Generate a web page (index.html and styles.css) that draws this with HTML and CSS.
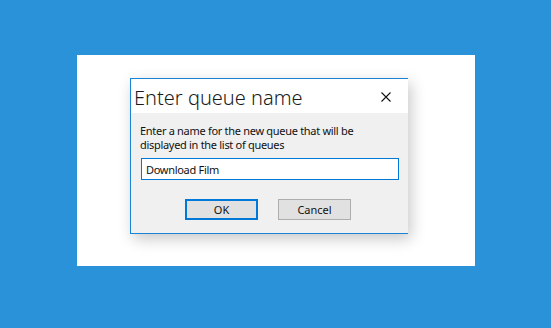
FILE: index.html
```html
<!DOCTYPE html>
<html lang="en">
<head>
    <meta charset="UTF-8">
    <meta name="viewport" content="width=device-width, initial-scale=1.0">
    <title>Enter queue name</title>
    <link rel="stylesheet" href="styles.css">
</head>
<body>
    <div class="panel">
        <div class="dialog">
            <div class="titlebar">
                <span class="title">Enter queue name</span>
                <button class="close" aria-label="Close">
                    <svg width="10" height="10" viewBox="0 0 10 10">
                        <path d="M0.5 0.5 L9.5 9.5 M9.5 0.5 L0.5 9.5" stroke="#111" stroke-width="1.1" fill="none"/>
                    </svg>
                </button>
            </div>
            <div class="content">
                <p class="prompt">Enter a name for the new queue that will be displayed in the list of queues</p>
                <input type="text" class="name-input" value="Download Film">
                <div class="actions">
                    <button class="button default">OK</button>
                    <button class="button">Cancel</button>
                </div>
            </div>
        </div>
    </div>
</body>
</html>
```

FILE: styles.css
```css
body {
    margin: 0;
    height: 328px;
    background-color: #2a92d8;
    font-family: "Noto Sans", "Open Sans", sans-serif;
    padding: 55px 0 0 77px;
    box-sizing: border-box;
}

.panel {
    width: 398px;
    height: 211px;
    background: #fff;
    padding: 23px 0 0 53px;
    box-sizing: border-box;
}

.dialog {
    width: 278px;
    background: #f0f0f0;
    border-top: 1px solid #1883d7;
    border-left: 1px solid #1883d7;
    border-bottom: 1px solid #1883d7;
    box-sizing: border-box;
    box-shadow: 3px 5px 14px rgba(0, 0, 0, 0.22);
}

.titlebar {
    height: 34px;
    background: #fff;
    display: flex;
    align-items: center;
    justify-content: space-between;
    padding: 0 17px 0 3px;
}

.title {
    font-size: 20px;
    color: #1b1b1b;
    font-weight: 300;
    margin-top: 2px;
}

.close {
    border: none;
    background: none;
    padding: 0;
    width: 10px;
    height: 10px;
    display: flex;
    margin-top: 2px;
}

.content {
    padding: 11px 9px 13px 9px;
}

.prompt {
    margin: 0 0 6px 0;
    font-size: 11px;
    line-height: 14px;
    letter-spacing: -0.3px;
    color: #111;
}

.name-input {
    display: block;
    width: 258px;
    height: 22px;
    box-sizing: border-box;
    border: 1px solid #0078d7;
    margin-left: 1px;
    padding: 0 4px;
    font-family: inherit;
    font-size: 11px;
    letter-spacing: -0.3px;
    color: #111;
    outline: none;
}

.actions {
    display: flex;
    justify-content: center;
    gap: 20px;
    margin-top: 19px;
    padding-right: 3px;
}

.button {
    width: 73px;
    height: 21px;
    background: #e1e1e1;
    border: 1px solid #adadad;
    font-family: inherit;
    font-size: 11px;
    color: #111;
    padding: 0;
}

.button.default {
    border: 2px solid #0078d7;
}
```
